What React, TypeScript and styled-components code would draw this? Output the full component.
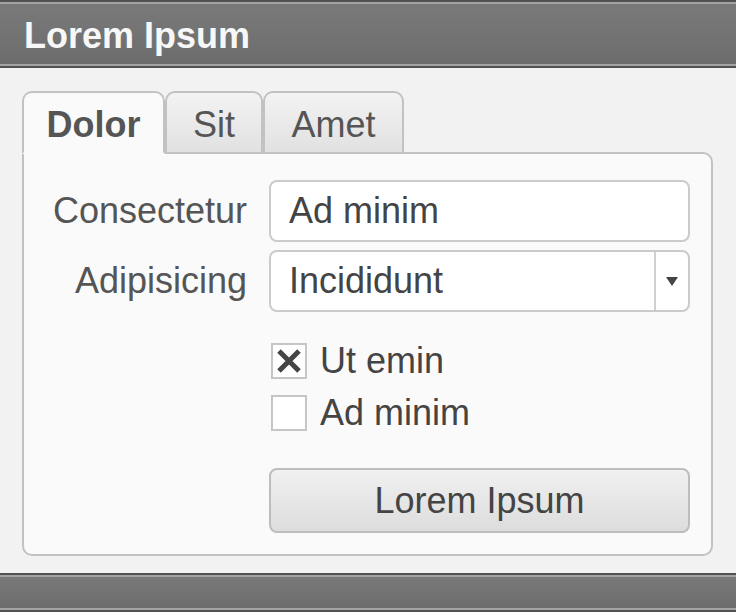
import * as React from 'react';
import styled, { createGlobalStyle } from 'styled-components';

const GlobalStyle = createGlobalStyle`
  html, body {
    margin: 0;
    padding: 0;
    height: 100%;
    background: #f2f2f2;
    font-family: "Liberation Sans", Arial, Helvetica, sans-serif;
  }
  #root {
    height: 100%;
  }
`;

const Page = styled.div`
  display: flex;
  flex-direction: column;
  height: 100vh;
  overflow: hidden;
`;

const Bar = styled.div<{ $height: number }>`
  flex: 0 0 auto;
  box-sizing: border-box;
  height: ${(props) => props.$height}px;
  display: flex;
  align-items: center;
  padding-left: 24px;
  border-top: 2px solid #525252;
  border-bottom: 2px solid #525252;
  background: linear-gradient(#7a7a7a, #6c6c6c);
  box-shadow: inset 0 2px 0 #a3a3a3, inset 0 -2px 0 #a3a3a3;
`;

const Title = styled.h1`
  margin: 0;
  padding-top: 3px;
  font-size: 36px;
  line-height: 36px;
  font-weight: bold;
  color: #f7f7f7;
`;

const Body = styled.div`
  flex: 1 1 auto;
  padding: 23px 23px 0 22px;
`;

const TabBar = styled.div`
  display: flex;
  position: relative;
  z-index: 1;
  margin-bottom: -2px;
`;

const Tab = styled.div<{ $active?: boolean; $width: number }>`
  box-sizing: border-box;
  width: ${(props) => props.$width}px;
  height: 63px;
  padding-top: 2px;
  text-align: center;
  line-height: 59px;
  font-size: 36px;
  color: #555;
  font-weight: ${(props) => (props.$active ? 'bold' : 'normal')};
  border: 2px solid #c2c2c2;
  border-bottom-color: ${(props) => (props.$active ? '#fafafa' : '#c2c2c2')};
  border-radius: 10px 10px 0 0;
  background: ${(props) => (props.$active ? '#fafafa' : 'linear-gradient(#f3f3f3, #e1e1e1)')};
  cursor: pointer;
`;

const Panel = styled.div`
  background: #fafafa;
  border: 2px solid #c2c2c2;
  border-radius: 0 10px 10px 10px;
  padding: 26px 21px 21px 0;
`;

const Form = styled.div`
  display: grid;
  grid-template-columns: 223px 421px;
  column-gap: 22px;
  row-gap: 8px;
`;

const Label = styled.label`
  align-self: center;
  text-align: right;
  font-size: 36px;
  color: #555;
  white-space: nowrap;
`;

const TextInput = styled.input`
  box-sizing: border-box;
  width: 100%;
  height: 62px;
  margin: 0;
  padding: 0 18px;
  font-family: inherit;
  font-size: 36px;
  color: #444;
  background: #fff;
  border: 2px solid #cbcbcb;
  border-radius: 8px;
  outline: none;
`;

const SelectBox = styled.div`
  box-sizing: border-box;
  height: 62px;
  display: flex;
  background: #fff;
  border: 2px solid #cbcbcb;
  border-radius: 8px;
`;

const SelectValue = styled.div`
  flex: 1;
  padding-left: 18px;
  line-height: 58px;
  font-size: 36px;
  color: #444;
`;

const SelectArrow = styled.div`
  width: 32px;
  display: grid;
  place-items: center;
  border-left: 2px solid #d0d0d0;
`;

const Checks = styled.div`
  grid-column: 2;
  display: flex;
  flex-direction: column;
  gap: 16px;
  margin: 23px 0 0 2px;
`;

const CheckRow = styled.label`
  display: flex;
  align-items: center;
  gap: 13px;
  height: 36px;
  font-size: 36px;
  color: #444;
`;

const Box = styled.span`
  box-sizing: border-box;
  width: 36px;
  height: 36px;
  display: grid;
  place-items: center;
  background: #fff;
  border: 2px solid #c6c6c6;
`;

const Button = styled.button`
  grid-column: 2;
  margin-top: 29px;
  height: 65px;
  font-family: inherit;
  font-size: 36px;
  color: #444;
  border: 2px solid #bdbdbd;
  border-radius: 8px;
  background: linear-gradient(#f0f0f0, #dddddd);
  cursor: pointer;
`;

const Checkbox: React.FC<{ checked?: boolean; label: string }> = ({ checked, label }) => (
  <CheckRow>
    <Box>
      {checked && (
        <svg width="28" height="28" viewBox="0 0 28 28">
          <path d="M4 4 L24 24 M24 4 L4 24" stroke="#444" strokeWidth="5" />
        </svg>
      )}
    </Box>
    {label}
  </CheckRow>
);

const tabs = [
  { name: 'Dolor', width: 143 },
  { name: 'Sit', width: 98 },
  { name: 'Amet', width: 141 },
];

const App: React.FC = () => {
  const [tab, setTab] = React.useState('Dolor');

  return (
    <Page>
      <GlobalStyle />
      <Bar $height={68}>
        <Title>Lorem Ipsum</Title>
      </Bar>
      <Body>
        <TabBar>
          {tabs.map((t) => (
            <Tab key={t.name} $width={t.width} $active={tab === t.name} onClick={() => setTab(t.name)}>
              {t.name}
            </Tab>
          ))}
        </TabBar>
        <Panel>
          <Form>
            <Label>Consectetur</Label>
            <TextInput defaultValue="Ad minim" />
            <Label>Adipisicing</Label>
            <SelectBox>
              <SelectValue>Incididunt</SelectValue>
              <SelectArrow>
                <svg width="12" height="9" viewBox="0 0 12 9">
                  <path d="M0 0 H12 L6 9 Z" fill="#444" />
                </svg>
              </SelectArrow>
            </SelectBox>
            <Checks>
              <Checkbox checked label="Ut emin" />
              <Checkbox label="Ad minim" />
            </Checks>
            <Button>Lorem Ipsum</Button>
          </Form>
        </Panel>
      </Body>
      <Bar $height={39} />
    </Page>
  );
};

export default App;
